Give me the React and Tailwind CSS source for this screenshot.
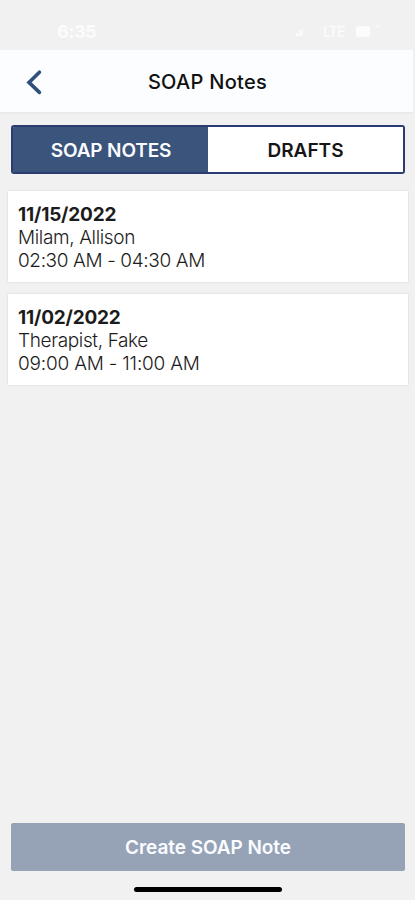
const notes = [
  { date: "11/15/2022", name: "Milam, Allison", time: "02:30 AM - 04:30 AM", tracking: "tracking-[-0.38px]" },
  { date: "11/02/2022", name: "Therapist, Fake", time: "09:00 AM - 11:00 AM", tracking: "tracking-[-0.2px]" },
];

function StatusBar() {
  return (
    <div className="flex h-[50px] shrink-0 items-end justify-between pb-[8px] pl-[57px] pr-[34px] text-[#fcfcfc]">
      <span className="text-[18px] font-bold leading-[20px] tracking-[-0.4px]">6:35</span>
      <div className="flex h-[20px] items-center">
        <svg width="14" height="10" viewBox="0 0 14 10" fill="currentColor">
          <rect x="2" y="6" width="2.5" height="3" />
          <rect x="5.5" y="3" width="2.5" height="6" />
          <rect x="9" y="1" width="2" height="8" opacity=".3" />
        </svg>
        <span className="ml-[15px] w-[22px] text-[14px] font-medium leading-[20px] tracking-[-0.8px]">LTE</span>
        <svg className="ml-[11px]" width="25" height="20" viewBox="0 0 25 20" fill="currentColor">
          <rect x="0" y="4" width="14" height="11" rx="2" />
          <rect x="20" y="3" width="3" height="3" rx="1" opacity=".5" />
        </svg>
      </div>
    </div>
  );
}

function NoteCard({ note }) {
  return (
    <article className="h-[91px] bg-white pl-[10px] pt-[12px] text-[19px] leading-[23px] text-[#1c1c1c] shadow-[0_0_2px_rgba(0,0,0,0.14)]">
      <h2 className="font-bold tracking-[-0.2px]">{note.date}</h2>
      <p className="font-light tracking-[-0.36px]">{note.name}</p>
      <p className={`font-light ${note.tracking}`}>{note.time}</p>
    </article>
  );
}

export default function App() {
  return (
    <div className="flex h-[900px] w-[415px] flex-col overflow-hidden bg-[#f1f1f1] font-['Inter',sans-serif]">
      <StatusBar />
      <header className="mr-[2px] grid h-[64px] shrink-0 grid-cols-[68px_1fr_66px] items-center border-b-2 border-[#e9eaeb] bg-[#fbfdfe] pt-[2px]">
        <button aria-label="Back" className="pl-[26px]">
          <svg width="17" height="26" viewBox="0 0 17 26" fill="none" stroke="#304f7d" strokeWidth="3.6" strokeLinecap="round" strokeLinejoin="miter">
            <path d="M13.4 3.2 3 13.4l10.4 10" />
          </svg>
        </button>
        <h1 className="whitespace-nowrap text-center text-[20px] font-medium leading-[26px] tracking-[0.3px] text-[#111]">SOAP Notes</h1>
      </header>
      <div className="ml-[11px] mr-[10px] mt-[11px] flex h-[49px] shrink-0 overflow-hidden rounded-[3px] border-2 border-[#2b3c73] text-[19px] font-semibold">
        <button className="w-[195px] bg-[#3a547b] pl-[1px] pt-[3px] tracking-[-0.15px] text-[#fafcff]">SOAP NOTES</button>
        <button className="flex-1 bg-white pt-[3px] text-[#161616]">DRAFTS</button>
      </div>
      <main className="ml-[8px] mr-[7px] mt-[17px] flex flex-1 flex-col gap-[12px]">
        {notes.map((note) => (
          <NoteCard key={note.date} note={note} />
        ))}
      </main>
      <button className="ml-[11px] mr-[10px] h-[48px] shrink-0 rounded-[2px] bg-[#96a3b7] pt-[2px] text-[19px] font-semibold tracking-[-0.06px] text-[#fafcff]">
        Create SOAP Note
      </button>
      <div className="mx-auto mb-[8px] mt-[16px] h-[5px] w-[148px] shrink-0 rounded-full bg-black" />
    </div>
  );
}
